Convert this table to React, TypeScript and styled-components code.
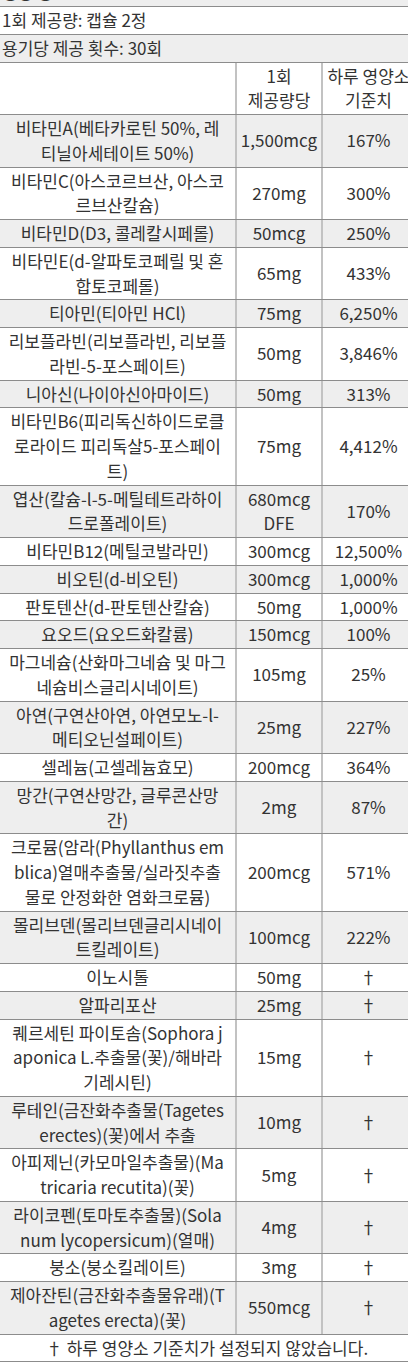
import styled, { createGlobalStyle } from 'styled-components'

interface INutrient {
  name: string[]
  amount: string[]
  dv: string
}

const NUTRIENTS: INutrient[] = [
  { name: ['비타민A(베타카로틴 50%, 레', '티닐아세테이트 50%)'], amount: ['1,500mcg'], dv: '167%' },
  { name: ['비타민C(아스코르브산, 아스코', '르브산칼슘)'], amount: ['270mg'], dv: '300%' },
  { name: ['비타민D(D3, 콜레칼시페롤)'], amount: ['50mcg'], dv: '250%' },
  { name: ['비타민E(d-알파토코페릴 및 혼', '합토코페롤)'], amount: ['65mg'], dv: '433%' },
  { name: ['티아민(티아민 HCl)'], amount: ['75mg'], dv: '6,250%' },
  { name: ['리보플라빈(리보플라빈, 리보플', '라빈-5-포스페이트)'], amount: ['50mg'], dv: '3,846%' },
  { name: ['니아신(나이아신아마이드)'], amount: ['50mg'], dv: '313%' },
  { name: ['비타민B6(피리독신하이드로클', '로라이드 피리독살5-포스페이', '트)'], amount: ['75mg'], dv: '4,412%' },
  { name: ['엽산(칼슘-l-5-메틸테트라하이', '드로폴레이트)'], amount: ['680mcg', 'DFE'], dv: '170%' },
  { name: ['비타민B12(메틸코발라민)'], amount: ['300mcg'], dv: '12,500%' },
  { name: ['비오틴(d-비오틴)'], amount: ['300mcg'], dv: '1,000%' },
  { name: ['판토텐산(d-판토텐산칼슘)'], amount: ['50mg'], dv: '1,000%' },
  { name: ['요오드(요오드화칼륨)'], amount: ['150mcg'], dv: '100%' },
  { name: ['마그네슘(산화마그네슘 및 마그', '네슘비스글리시네이트)'], amount: ['105mg'], dv: '25%' },
  { name: ['아연(구연산아연, 아연모노-l-', '메티오닌설페이트)'], amount: ['25mg'], dv: '227%' },
  { name: ['셀레늄(고셀레늄효모)'], amount: ['200mcg'], dv: '364%' },
  { name: ['망간(구연산망간, 글루콘산망', '간)'], amount: ['2mg'], dv: '87%' },
  {
    name: ['크로뮴(암라(Phyllanthus em', 'blica)열매추출물/실라짓추출', '물로 안정화한 염화크로뮴)'],
    amount: ['200mcg'],
    dv: '571%',
  },
  { name: ['몰리브덴(몰리브덴글리시네이', '트킬레이트)'], amount: ['100mcg'], dv: '222%' },
  { name: ['이노시톨'], amount: ['50mg'], dv: '†' },
  { name: ['알파리포산'], amount: ['25mg'], dv: '†' },
  {
    name: ['퀘르세틴 파이토솜(Sophora j', 'aponica L.추출물(꽃)/해바라', '기레시틴)'],
    amount: ['15mg'],
    dv: '†',
  },
  { name: ['루테인(금잔화추출물(Tagetes', 'erectes)(꽃)에서 추출'], amount: ['10mg'], dv: '†' },
  { name: ['아피제닌(카모마일추출물)(Ma', 'tricaria recutita)(꽃)'], amount: ['5mg'], dv: '†' },
  { name: ['라이코펜(토마토추출물)(Sola', 'num lycopersicum)(열매)'], amount: ['4mg'], dv: '†' },
  { name: ['붕소(붕소킬레이트)'], amount: ['3mg'], dv: '†' },
  { name: ['제아잔틴(금잔화추출물유래)(T', 'agetes erecta)(꽃)'], amount: ['550mcg'], dv: '†' },
]

function Lines({ lines }: { lines: string[] }) {
  return (
    <>
      {lines.map((line, i) => (
        <Line key={i}>{line}</Line>
      ))}
    </>
  )
}

function App() {
  return (
    <>
      <GlobalStyle />
      <Sheet>
        <Row>
          <FullCell>영양 정보</FullCell>
        </Row>
        <Row>
          <FullCell>1회 제공량: 캡슐 2정</FullCell>
        </Row>
        <Row>
          <FullCell>용기당 제공 횟수: 30회</FullCell>
        </Row>
        <Row>
          <Cell />
          <Cell $divided>
            <Lines lines={['1회', '제공량당']} />
          </Cell>
          <Cell $divided>
            <Lines lines={['하루 영양소', '기준치']} />
          </Cell>
        </Row>
        {NUTRIENTS.map((n) => (
          <Row key={n.name[0]}>
            <Cell>
              <Lines lines={n.name} />
            </Cell>
            <Cell $divided>
              <Lines lines={n.amount} />
            </Cell>
            <Cell $divided>{n.dv}</Cell>
          </Row>
        ))}
        <Row>
          <FullCell $center>† 하루 영양소 기준치가 설정되지 않았습니다.</FullCell>
        </Row>
      </Sheet>
    </>
  )
}

const GlobalStyle = createGlobalStyle`
  html, body {
    margin: 0;
    padding: 0;
    background: #ffffff;
    overflow-x: hidden;
  }
  body {
    font-family: "Noto Sans CJK KR", "Noto Sans", sans-serif;
  }
`

const Sheet = styled.section`
  width: 414px;
  margin-top: -20.75px;
  color: #333333;
  font-size: 17px;
  line-height: 24.75px;
`

const Row = styled.div`
  display: grid;
  grid-template-columns: 235px 86px 93px;
  border-bottom: 1px solid #8c8c8c;
  background: #ffffff;
  &:nth-child(odd) {
    background: #eeeeee;
  }
`

const Cell = styled.div<{ $divided?: boolean }>`
  display: flex;
  flex-direction: column;
  align-items: center;
  justify-content: center;
  padding: 1px 0;
  text-align: center;
  white-space: nowrap;
  border-left: ${({ $divided }) => ($divided ? '2px solid #c2c2c2' : 'none')};
`

const FullCell = styled.div<{ $center?: boolean }>`
  grid-column: 1 / -1;
  padding: 1px 2px;
  text-align: ${({ $center }) => ($center ? 'center' : 'left')};
  white-space: nowrap;
`

const Line = styled.span`
  display: block;
`

export default App
